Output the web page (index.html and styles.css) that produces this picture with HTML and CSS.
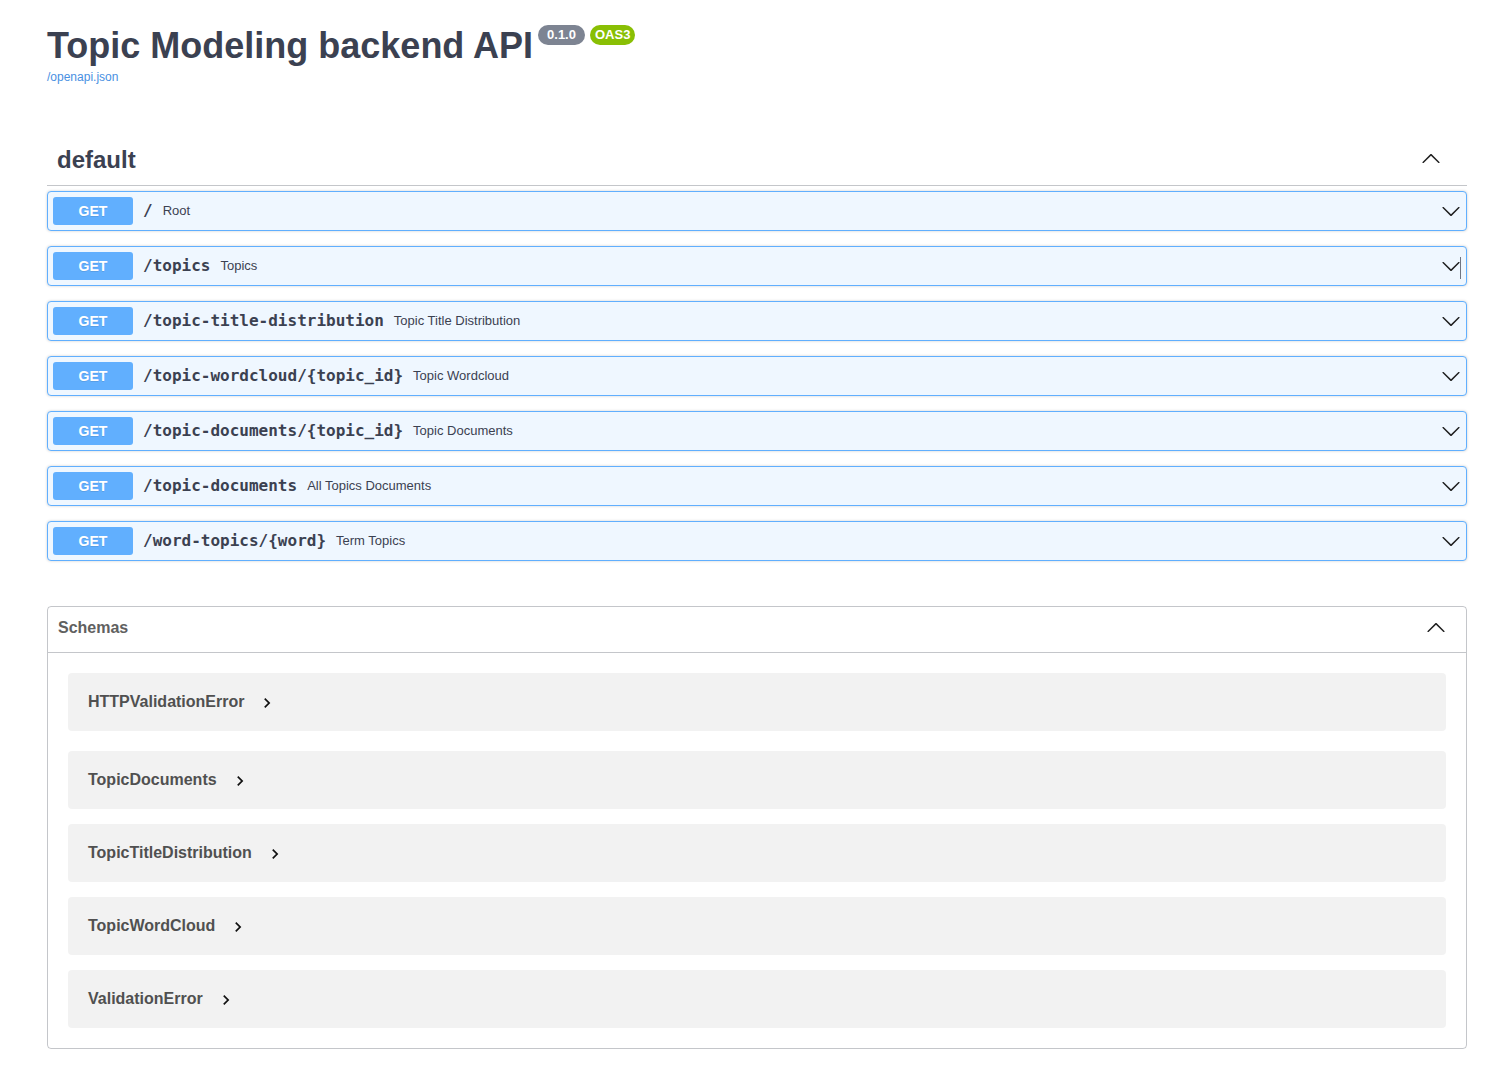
FILE: index.html
```html
<!DOCTYPE html>
<html lang="en">
<head>
<meta charset="utf-8">
<title>Topic Modeling backend API</title>
<link rel="stylesheet" href="styles.css">
</head>
<body>
<div class="wrapper">
  <div class="info">
    <div class="title-row">
      <h2 class="title">Topic Modeling backend API</h2>
      <span class="badge badge-version">0.1.0</span>
      <span class="badge badge-oas">OAS3</span>
    </div>
    <a class="spec-link" href="#">/openapi.json</a>
  </div>

  <section class="tag-section">
    <div class="tag">
      <span class="tag-name">default</span>
      <svg class="tag-arrow" width="20" height="20" viewBox="0 0 20 20"><path d="M17.418 14.908c.272.268.709.268.979 0s.271-.701 0-.969l-7.908-7.83c-.27-.268-.707-.268-.979 0l-7.908 7.83c-.27.268-.27.701 0 .969.271.268.709.268.979 0L10 7.773l7.418 7.135z"/></svg>
    </div>

    <div class="opblock">
      <span class="method">GET</span>
      <span class="path">/</span>
      <span class="desc">Root</span>
      <svg class="op-arrow" width="20" height="20" viewBox="0 0 20 20"><path d="M17.418 6.109c.272-.268.709-.268.979 0s.271.701 0 .969l-7.908 7.83c-.27.268-.707.268-.979 0l-7.908-7.83c-.27-.268-.27-.701 0-.969.271-.268.709-.268.979 0L10 13.25l7.418-7.141z"/></svg>
    </div>
    <div class="opblock">
      <span class="method">GET</span>
      <span class="path">/topics</span>
      <span class="desc">Topics</span>
      <svg class="op-arrow" width="20" height="20" viewBox="0 0 20 20"><path d="M17.418 6.109c.272-.268.709-.268.979 0s.271.701 0 .969l-7.908 7.83c-.27.268-.707.268-.979 0l-7.908-7.83c-.27-.268-.27-.701 0-.969.271-.268.709-.268.979 0L10 13.25l7.418-7.141z"/></svg>
      <span class="caret"></span>
    </div>
    <div class="opblock">
      <span class="method">GET</span>
      <span class="path">/topic-title-distribution</span>
      <span class="desc">Topic Title Distribution</span>
      <svg class="op-arrow" width="20" height="20" viewBox="0 0 20 20"><path d="M17.418 6.109c.272-.268.709-.268.979 0s.271.701 0 .969l-7.908 7.83c-.27.268-.707.268-.979 0l-7.908-7.83c-.27-.268-.27-.701 0-.969.271-.268.709-.268.979 0L10 13.25l7.418-7.141z"/></svg>
    </div>
    <div class="opblock">
      <span class="method">GET</span>
      <span class="path">/topic-wordcloud/{topic_id}</span>
      <span class="desc">Topic Wordcloud</span>
      <svg class="op-arrow" width="20" height="20" viewBox="0 0 20 20"><path d="M17.418 6.109c.272-.268.709-.268.979 0s.271.701 0 .969l-7.908 7.83c-.27.268-.707.268-.979 0l-7.908-7.830c-.27-.268-.27-.701 0-.969.271-.268.709-.268.979 0L10 13.25l7.418-7.141z"/></svg>
    </div>
    <div class="opblock">
      <span class="method">GET</span>
      <span class="path">/topic-documents/{topic_id}</span>
      <span class="desc">Topic Documents</span>
      <svg class="op-arrow" width="20" height="20" viewBox="0 0 20 20"><path d="M17.418 6.109c.272-.268.709-.268.979 0s.271.701 0 .969l-7.908 7.83c-.27.268-.707.268-.979 0l-7.908-7.83c-.27-.268-.27-.701 0-.969.271-.268.709-.268.979 0L10 13.25l7.418-7.141z"/></svg>
    </div>
    <div class="opblock">
      <span class="method">GET</span>
      <span class="path">/topic-documents</span>
      <span class="desc">All Topics Documents</span>
      <svg class="op-arrow" width="20" height="20" viewBox="0 0 20 20"><path d="M17.418 6.109c.272-.268.709-.268.979 0s.271.701 0 .969l-7.908 7.83c-.27.268-.707.268-.979 0l-7.908-7.83c-.27-.268-.27-.701 0-.969.271-.268.709-.268.979 0L10 13.25l7.418-7.141z"/></svg>
    </div>
    <div class="opblock">
      <span class="method">GET</span>
      <span class="path">/word-topics/{word}</span>
      <span class="desc">Term Topics</span>
      <svg class="op-arrow" width="20" height="20" viewBox="0 0 20 20"><path d="M17.418 6.109c.272-.268.709-.268.979 0s.271.701 0 .969l-7.908 7.83c-.27.268-.707.268-.979 0l-7.908-7.83c-.27-.268-.27-.701 0-.969.271-.268.709-.268.979 0L10 13.25l7.418-7.141z"/></svg>
    </div>
  </section>

  <section class="models">
    <h4 class="models-head">
      <span>Schemas</span>
      <svg class="models-arrow" width="20" height="20" viewBox="0 0 20 20"><path d="M17.418 14.908c.272.268.709.268.979 0s.271-.701 0-.969l-7.908-7.83c-.27-.268-.707-.268-.979 0l-7.908 7.83c-.27.268-.27.701 0 .969.271.268.709.268.979 0L10 7.773l7.418 7.135z"/></svg>
    </h4>
    <div class="models-body">
      <div class="model">
        <span class="model-title">HTTPValidationError</span>
        <svg class="model-toggle" width="20" height="20" viewBox="0 0 24 24"><path d="M10 6L8.59 7.41 13.17 12l-4.58 4.59L10 18l6-6z"/></svg>
      </div>
      <div class="model">
        <span class="model-title">TopicDocuments</span>
        <svg class="model-toggle" width="20" height="20" viewBox="0 0 24 24"><path d="M10 6L8.59 7.41 13.17 12l-4.58 4.59L10 18l6-6z"/></svg>
      </div>
      <div class="model">
        <span class="model-title">TopicTitleDistribution</span>
        <svg class="model-toggle" width="20" height="20" viewBox="0 0 24 24"><path d="M10 6L8.59 7.41 13.17 12l-4.58 4.59L10 18l6-6z"/></svg>
      </div>
      <div class="model">
        <span class="model-title">TopicWordCloud</span>
        <svg class="model-toggle" width="20" height="20" viewBox="0 0 24 24"><path d="M10 6L8.59 7.41 13.17 12l-4.58 4.59L10 18l6-6z"/></svg>
      </div>
      <div class="model">
        <span class="model-title">ValidationError</span>
        <svg class="model-toggle" width="20" height="20" viewBox="0 0 24 24"><path d="M10 6L8.59 7.41 13.17 12l-4.58 4.59L10 18l6-6z"/></svg>
      </div>
    </div>
  </section>
</div>
</body>
</html>
```

FILE: styles.css
```css
* { box-sizing: border-box; }

html, body {
  margin: 0;
  padding: 0;
  background: #fff;
  font-family: "Liberation Sans", Arial, sans-serif;
  color: #3b4151;
}

.wrapper {
  width: 1420px;
  margin-left: 47px;
  padding-top: 23px;
}

.info {
  margin-bottom: 49px;
}

.title-row {
  display: flex;
  align-items: flex-start;
}

.title {
  margin: 2px 0 0;
  font-size: 36px;
  line-height: 41px;
  font-weight: 700;
  color: #3b4151;
}

.badge {
  display: inline-block;
  margin-left: 5px;
  margin-top: 2px;
  height: 20px;
  line-height: 20px;
  border-radius: 57px;
  color: #fff;
  font-size: 13px;
  font-weight: 700;
}

.badge-version {
  background: #7d8492;
  padding: 0 9px;
}

.badge-oas {
  background: #89bf04;
  padding: 0 5px;
}

.spec-link {
  display: inline-block;
  margin-top: 4px;
  font-size: 12px;
  line-height: 14px;
  color: #4990e2;
  text-decoration: none;
}

.tag-section {
  display: flex;
  flex-direction: column;
}

.tag {
  display: flex;
  align-items: center;
  height: 52px;
  padding: 10px 26px 10px 10px;
  border-bottom: 1px solid rgba(59, 65, 81, 0.3);
  margin-bottom: 5px;
}

.tag-name {
  flex: 1;
  font-size: 24px;
  font-weight: 700;
  color: #3b4151;
}

.tag-arrow, .op-arrow, .models-arrow {
  fill: #1f1f1f;
  flex: none;
}

.tag-arrow {
  margin-bottom: 4px;
}

.models-arrow {
  margin-bottom: 2px;
}

.opblock {
  position: relative;
  display: flex;
  align-items: center;
  height: 40px;
  padding: 5px;
  margin-bottom: 15px;
  border: 1px solid #61affe;
  border-radius: 4px;
  background: #eff7ff;
  box-shadow: 0 0 3px rgba(0, 0, 0, 0.19);
}

.method {
  flex: none;
  width: 80px;
  height: 28px;
  line-height: 28px;
  text-align: center;
  background: #61affe;
  border-radius: 3px;
  color: #fff;
  font-size: 14px;
  font-weight: 700;
  text-shadow: 0 1px 0 rgba(0, 0, 0, 0.1);
}

.path {
  padding: 0 10px 2px;
  font-family: "DejaVu Sans Mono", monospace;
  font-size: 16px;
  font-weight: 700;
  color: #3b4151;
}

.desc {
  flex: 1;
  padding-bottom: 2px;
  font-size: 13px;
  color: #3b4151;
}

.caret {
  position: absolute;
  left: 1412px;
  top: 10px;
  width: 1px;
  height: 22px;
  background: #6f7480;
}

.models {
  margin-top: 30px;
  margin-bottom: 30px;
  border: 1px solid rgba(59, 65, 81, 0.3);
  border-radius: 4px;
}

.models-head {
  display: flex;
  align-items: center;
  margin: 0;
  height: 46px;
  padding: 8px 20px 12px 10px;
  border-bottom: 1px solid rgba(59, 65, 81, 0.3);
  font-size: 16px;
  font-weight: 700;
  color: #606060;
}

.models-head span {
  flex: 1;
}

.models-body {
  padding: 20px;
}

.model {
  display: flex;
  align-items: center;
  height: 58px;
  padding: 0 20px;
  margin-bottom: 15px;
  background: rgba(0, 0, 0, 0.05);
  border-radius: 4px;
}

.model:first-child {
  margin-bottom: 20px;
}

.model:last-child {
  margin-bottom: 0;
}

.model-title {
  font-size: 16px;
  font-weight: 700;
  color: #505050;
}

.model-toggle {
  margin-left: 13px;
  margin-top: 2px;
  fill: #111;
}
```
